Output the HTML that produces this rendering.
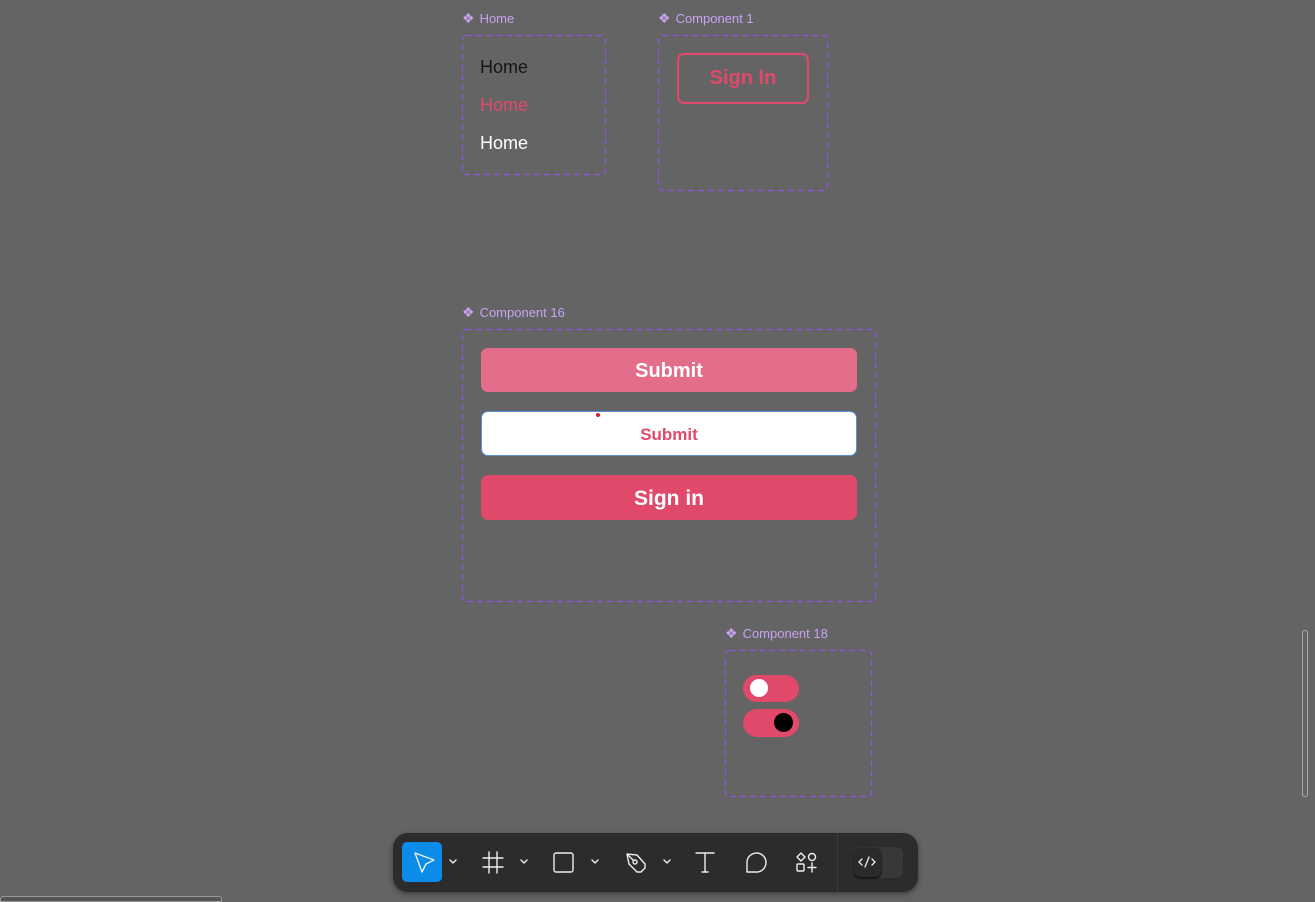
<!DOCTYPE html><html><head><style>
body{margin:0;width:1315px;height:900px;background:#646464;position:relative;overflow:hidden;font-family:"Liberation Sans",sans-serif}
.a{position:absolute}
.lbl{color:#c9a3f2;font-size:13px;display:flex;align-items:center;gap:5px}
.lbl span{font-size:14px}
.h{font-size:18px}
.btn{border-radius:7px;display:flex;align-items:center;justify-content:center;font-weight:bold;box-sizing:border-box}
.ic{position:absolute;top:0}
</style></head><body>
<svg class="a" style="left:0;top:0" width="1315" height="900" fill="none" stroke="#8e55e0" stroke-width="1.2" stroke-dasharray="6 4">
<rect x="462.5" y="35.5" width="143" height="139" rx="4"/>
<rect x="658.5" y="35.5" width="169" height="155" rx="4"/>
<rect x="462.5" y="329.5" width="413" height="272" rx="4"/>
<rect x="725.5" y="650.5" width="146" height="146" rx="4"/>
</svg>
<div class="a lbl" style="left:462px;top:10px"><span>❖</span>Home</div>
<div class="a lbl" style="left:658px;top:10px"><span>❖</span>Component 1</div>
<div class="a h" style="left:480px;top:57px;color:#151515">Home</div>
<div class="a h" style="left:480px;top:95px;color:#e2486b">Home</div>
<div class="a h" style="left:480px;top:133px;color:#fff">Home</div>
<div class="a btn" style="left:677px;top:53px;width:132px;height:51px;border:2px solid #e0496a;color:#e0496a;font-size:20px">Sign In</div>

<div class="a lbl" style="left:462px;top:304px"><span>❖</span>Component 16</div>
<div class="a btn" style="left:481px;top:348px;width:376px;height:44px;background:#e46e8a;color:#fff;font-size:20px;padding-top:3px">Submit</div>
<div class="a btn" style="left:481px;top:411px;width:376px;height:45px;background:#fff;border:1px solid #5b8fd6;color:#e0496a;font-size:17px;padding-top:2px">Submit</div>
<div class="a" style="left:596px;top:413px;width:4px;height:4px;border-radius:50%;background:#e01a2a"></div>
<div class="a btn" style="left:481px;top:475px;width:376px;height:45px;background:#e0496a;color:#fff;font-size:21px;padding-top:3px">Sign in</div>

<div class="a lbl" style="left:725px;top:625px"><span>❖</span>Component 18</div>
<div class="a" style="left:743px;top:675px;width:56px;height:27px;border-radius:14px;background:#e0496a"></div>
<div class="a" style="left:750px;top:679px;width:18px;height:18px;border-radius:50%;background:#fff"></div>
<div class="a" style="left:743px;top:709px;width:56px;height:28px;border-radius:14px;background:#e0496a"></div>
<div class="a" style="left:774px;top:713px;width:19px;height:19px;border-radius:50%;background:#000"></div>

<div class="a" style="left:1302px;top:630px;width:6px;height:167px;border:1px solid #aaa;border-radius:4px;box-sizing:border-box"></div>
<div class="a" style="left:0;top:896px;width:220px;height:4px;border:1px solid #999;border-radius:3px 3px 0 0;background:#555"></div>

<div class="a" style="left:393px;top:833px;width:525px;height:59px;background:#2c2c2c;border-radius:15px;box-shadow:0 2px 6px rgba(0,0,0,.4)">
<div class="a" style="left:9px;top:9px;width:40px;height:40px;background:#0c8ce9;border-radius:5px"></div>
<svg class="ic" width="525" height="59" fill="none" stroke="#eee" stroke-width="1.4" stroke-linecap="round" stroke-linejoin="round">
<path d="M22 20 L41 27 L33 31 L29 39 Z"/>
<path d="M57 27l3 3 3-3M128 27l3 3 3-3M199 27l3 3 3-3M271 27l3 3 3-3"/>
<path d="M96 19v21M104 19v21M90 25h20M90 34h20"/>
<rect x="161" y="20" width="19" height="19" rx="2"/>
<path d="M234 21 L244 22 L252 31 L252 35 L248 39 L244 39 L236 31 Z"/><circle cx="242" cy="29" r="2"/><path d="M235 22 L240.5 27.5"/>
<path d="M303 20h18M312 20v19M309 39h6"/>
<path d="M354 39 L354 30 A9.5 9.5 0 1 1 363 39 Z"/>
<path d="M408 20l4 4-4 4-4-4z"/><circle cx="419" cy="24" r="3.5"/><rect x="404" y="31" width="7" height="7" rx="1"/><path d="M419 30v9M415 34.5h8"/>
</svg>
<div class="a" style="left:444px;top:0;width:1px;height:59px;background:#3c3c3c"></div>
<div class="a" style="left:460px;top:14px;width:50px;height:31px;background:#383838;border-radius:7px"></div>
<div class="a" style="left:461px;top:15px;width:27px;height:29px;background:#2a2a2a;border-radius:6px;box-shadow:0 1px 2px #000"></div>
<svg class="ic" width="525" height="59" fill="none" stroke="#eee" stroke-width="1.3" stroke-linecap="round"><path d="M469 26l-3 3 3 3M479 26l3 3-3 3M476 24l-4 10"/></svg>
</div>
</body></html>
